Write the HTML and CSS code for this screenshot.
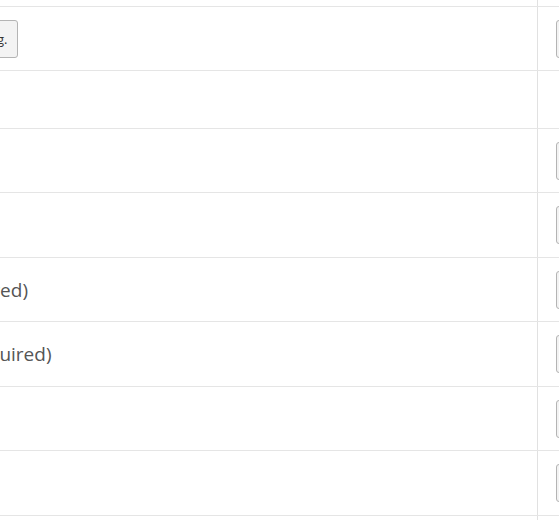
FILE: index.html
```html
<!DOCTYPE html>
<html lang="en">
<head>
    <meta charset="UTF-8">
    <meta name="viewport" content="width=device-width, initial-scale=1.0">
    <title>Fields</title>
    <link rel="stylesheet" href="styles.css">
</head>
<body>
    <div class="field-list">
        <div class="row">
            <div class="cell-label">Avatar</div>
            <div class="cell-action"><button class="btn">Edit</button></div>
        </div>
        <div class="row">
            <div class="cell-label"><button class="btn btn-small">Upload an img.</button></div>
            <div class="cell-action"><button class="btn">Edit</button></div>
        </div>
        <div class="row row-short">
            <div class="cell-label"></div>
            <div class="cell-action"></div>
        </div>
        <div class="row">
            <div class="cell-label"></div>
            <div class="cell-action"><button class="btn">Edit</button></div>
        </div>
        <div class="row row-tall">
            <div class="cell-label"></div>
            <div class="cell-action"><button class="btn">Edit</button></div>
        </div>
        <div class="row">
            <div class="cell-label">Email (required)</div>
            <div class="cell-action"><button class="btn">Edit</button></div>
        </div>
        <div class="row row-tall">
            <div class="cell-label">Address (required)</div>
            <div class="cell-action"><button class="btn">Edit</button></div>
        </div>
        <div class="row">
            <div class="cell-label"></div>
            <div class="cell-action"><button class="btn">Edit</button></div>
        </div>
        <div class="row row-tall">
            <div class="cell-label"></div>
            <div class="cell-action"><button class="btn">Edit</button></div>
        </div>
        <div class="row">
            <div class="cell-label"></div>
            <div class="cell-action"><button class="btn">Edit</button></div>
        </div>
    </div>
</body>
</html>
```

FILE: styles.css
```css
html, body {
    overflow: hidden;
}

body {
    margin: 0;
    background: #fff;
    font-family: 'Open Sans', sans-serif;
    color: #555;
}

.field-list {
    margin-top: -57px;
    margin-left: -123px;
    width: 820px;
}

.row {
    display: flex;
    height: 64px;
    box-sizing: border-box;
    border-bottom: 1px solid #e5e5e5;
}

.row-short {
    height: 58px;
}

.row-tall {
    height: 65px;
}

.cell-label {
    box-sizing: border-box;
    width: 661px;
    padding-left: 10px;
    border-right: 1px solid #e1e1e1;
    display: flex;
    align-items: center;
    font-size: 19px;
}

.cell-action {
    padding-left: 18px;
    display: flex;
    align-items: center;
}

.btn {
    height: 38px;
    padding: 0 14px;
    font-family: 'Open Sans', sans-serif;
    font-size: 13px;
    color: #333;
    background: #f3f3f3;
    border: 1px solid #b4b4b4;
    border-radius: 3px;
}

.btn-small {
    margin-left: 18px;
    padding: 0 10px;
}
```
